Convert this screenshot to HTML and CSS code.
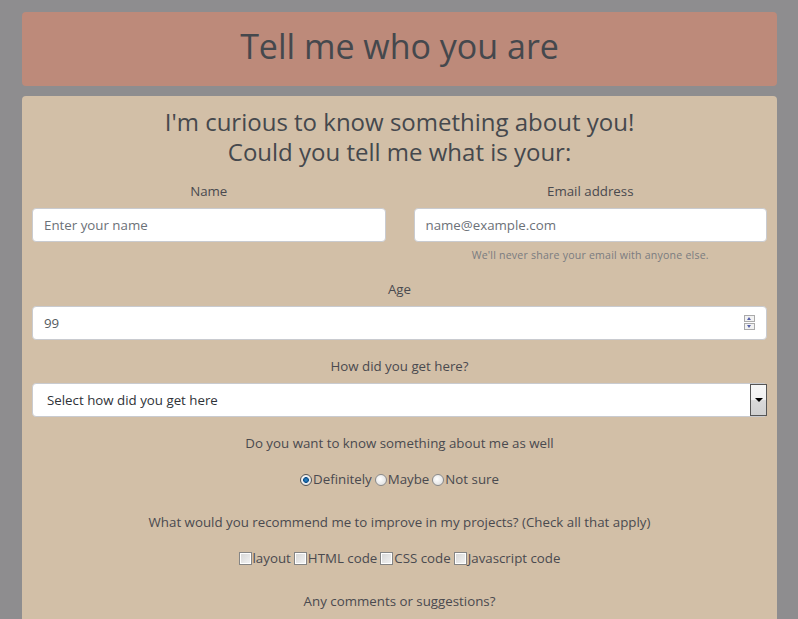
FILE: index.html
```html
<!DOCTYPE html>
<html>
<head>
<meta charset="utf-8">
<link rel="stylesheet" href="styles.css">
</head>
<body>
<div class="page">
  <header class="banner"><h1 class="title">Tell me who you are</h1></header>
  <main class="card">
    <h2 class="intro">I'm curious to know something about you!<br>Could you tell me what is your:</h2>
    <div class="row">
      <div class="group">
        <label class="lbl">Name</label>
        <input class="field" type="text" placeholder="Enter your name">
      </div>
      <div class="group">
        <label class="lbl">Email address</label>
        <input class="field" type="email" placeholder="name@example.com">
        <small class="help">We'll never share your email with anyone else.</small>
      </div>
    </div>
    <div class="group">
      <label class="lbl">Age</label>
      <div class="numwrap">
        <input class="field num" type="text" value="99">
        <span class="spin"><span class="sb up"></span><span class="sb down"></span></span>
      </div>
    </div>
    <div class="group">
      <label class="lbl">How did you get here?</label>
      <div class="selwrap">
        <select class="field sel"><option>Select how did you get here</option></select>
        <span class="drop"><span class="tri"></span></span>
      </div>
    </div>
    <div class="group choice">
      <p class="lbl q">Do you want to know something about me as well</p>
      <div class="opts">
        <label class="opt"><input class="radio" type="radio" name="r" checked>Definitely</label>
        <label class="opt"><input class="radio" type="radio" name="r">Maybe</label>
        <label class="opt"><input class="radio" type="radio" name="r">Not sure</label>
      </div>
    </div>
    <div class="group choice">
      <p class="lbl q">What would you recommend me to improve in my projects? (Check all that apply)</p>
      <div class="opts">
        <label class="opt"><input class="check" type="checkbox">layout</label>
        <label class="opt"><input class="check" type="checkbox">HTML code</label>
        <label class="opt"><input class="check" type="checkbox">CSS code</label>
        <label class="opt"><input class="check" type="checkbox">Javascript code</label>
      </div>
    </div>
    <div class="group">
      <p class="lbl q2">Any comments or suggestions?</p>
      <textarea class="field area"></textarea>
    </div>
  </main>
</div>
</body>
</html>
```
FILE: styles.css
```css
html, body { margin: 0; padding: 0; }
body {
  background: #8e8d8f;
  font-family: "Open Sans", "Noto Sans", sans-serif;
  color: #4a4a4f;
  font-size: 13.3px;
  overflow: hidden;
  height: 619px;
}
.page { width: 755px; margin: 12px 0 0 22px; }
.banner {
  background: #bd8a7a;
  border-radius: 4px;
  height: 74px;
  display: flex;
  align-items: center;
  justify-content: center;
}
.title {
  margin: 0;
  font-weight: 400;
  font-size: 34px;
  color: #45484d;
  line-height: 1;
  position: relative;
  top: -3px;
}
.card {
  margin-top: 10px;
  background: #d2bfa7;
  border-radius: 4px 4px 0 0;
  padding: 11px 10px 40px;
}
.intro {
  margin: 0 0 14px;
  text-align: center;
  font-weight: 400;
  font-size: 24px;
  line-height: 30px;
  color: #45484d;
}
.row { display: flex; gap: 28px; }
.row .group { flex: 1; }
.group { display: flex; flex-direction: column; margin-bottom: 16px; }
.lbl {
  text-align: center;
  line-height: 21px;
  margin: 0 0 6px;
  font-size: 13.3px;
  color: #4a4a4f;
}
.field {
  box-sizing: border-box;
  height: 34px;
  width: 100%;
  border: 1px solid #c9cbd0;
  border-radius: 4px;
  background: #fff;
  padding: 0 11px;
  font: inherit;
  font-size: 13.3px;
  color: #555a60;
  outline: none;
}
.field::placeholder { color: #6c7178; }
.help {
  text-align: center;
  font-size: 10.6px;
  color: #7a7c80;
  margin-top: 5px;
  margin-bottom: -1px;
  line-height: 17px;
  letter-spacing: 0.2px;
}
.numwrap, .selwrap { position: relative; }
.spin {
  position: absolute;
  right: 12px;
  top: 9px;
  width: 11px;
  display: flex;
  flex-direction: column;
  gap: 1px;
}
.sb {
  box-sizing: border-box;
  height: 7px;
  border: 1px solid #aaa;
  background: #f2f2f2;
  position: relative;
}
.sb::after {
  content: "";
  position: absolute;
  left: 2px;
  border-left: 2.5px solid transparent;
  border-right: 2.5px solid transparent;
}
.up::after { top: 1px; border-bottom: 3px solid #5560a8; }
.down::after { top: 1px; border-top: 3px solid #5560a8; }
.sel {
  appearance: none;
  -webkit-appearance: none;
  padding-left: 14px;
  color: #2f3338;
}
.drop {
  position: absolute;
  right: 0;
  top: 1px;
  width: 17px;
  height: 32px;
  box-sizing: border-box;
  border: 1px solid #555;
  background: linear-gradient(#f7f7f7 0%, #f2f2f2 48%, #d9d9d9 52%, #d0d0d0 100%);
  display: flex;
  align-items: center;
  justify-content: center;
}
.tri {
  width: 0; height: 0;
  border-left: 4px solid transparent;
  border-right: 4px solid transparent;
  border-top: 4px solid #000;
}
.choice { margin-bottom: 0; }
.q { margin: 0 0 15px; }
.opts {
  display: flex;
  justify-content: center;
  gap: 3px;
  line-height: 21px;
  margin-bottom: 22px;
}
.opt { display: inline-flex; align-items: center; }
.radio, .check {
  appearance: none;
  -webkit-appearance: none;
  margin: 0 1px 0 0;
  box-sizing: border-box;
  flex: none;
}
.radio {
  width: 12px; height: 12px;
  border-radius: 50%;
  border: 1px solid #8a8a8a;
  background: radial-gradient(circle at 40% 40%, #ffffff 0%, #e4e4e4 70%, #cfcfcf 100%);
}
.radio:checked {
  background:
    radial-gradient(circle at 50% 50%, #2d8fd0 0, #0f4f8c 2.6px, transparent 3.2px),
    radial-gradient(circle at 40% 40%, #ffffff 0%, #e4e4e4 70%, #cfcfcf 100%);
  border-color: #555;
}
.check {
  width: 13px; height: 13px;
  border: 1px solid #858585;
  background: linear-gradient(135deg, #d6d6d6, #f4f4f4);
  box-shadow: inset 0 0 0 1px #fff;
}
.q2 { margin: 0 0 7px; }
.area { height: 80px; resize: none; margin-left: 1px; }
```
